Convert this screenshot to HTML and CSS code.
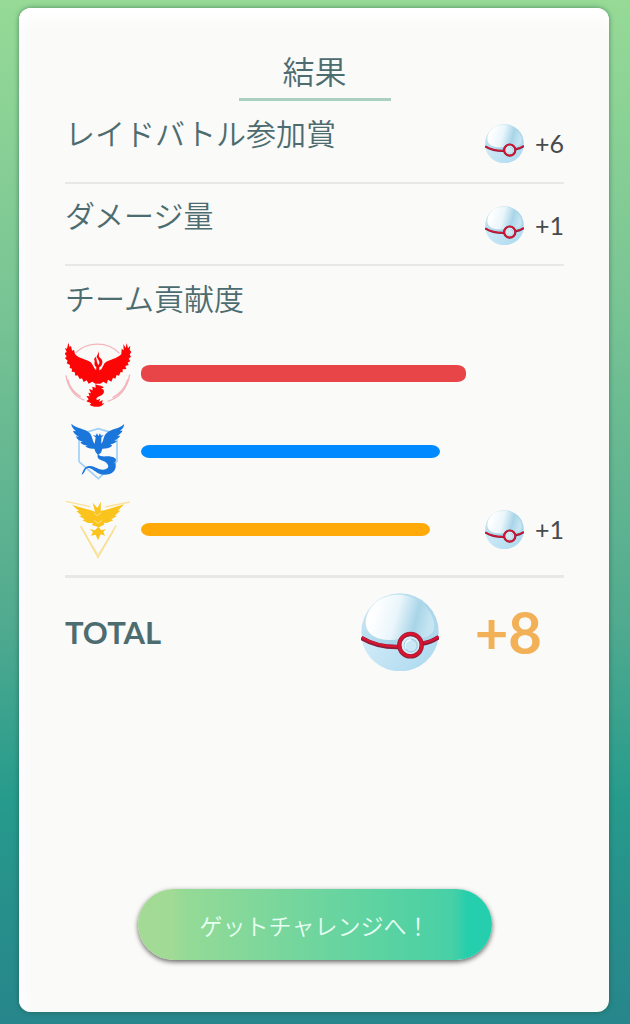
FILE: index.html
```html
<!DOCTYPE html>
<html lang="ja">
<head>
    <meta charset="utf-8">
    <meta name="viewport" content="width=device-width, initial-scale=1">
    <title>結果</title>
    <link rel="stylesheet" href="styles.css">
</head>

<body>
<!-- Shared ball symbol -->
<svg class="sprite" width="0" height="0" aria-hidden="true">
    <defs>
        <linearGradient id="ball-base" x1="0" y1="0" x2="1" y2="1">
            <stop offset="0" stop-color="#d5edf7"/>
            <stop offset="0.5" stop-color="#a9d5ea"/>
            <stop offset="1" stop-color="#b4dcef"/>
        </linearGradient>
        <linearGradient id="ball-shine" x1="0.1" y1="0.4" x2="0.95" y2="0.55">
            <stop offset="0" stop-color="#ffffff"/>
            <stop offset="0.4" stop-color="#eaf6fb"/>
            <stop offset="0.75" stop-color="#a8d5e8"/>
            <stop offset="1" stop-color="#c6e5f2"/>
        </linearGradient>
        <linearGradient id="ball-bottom" x1="0" y1="0" x2="1" y2="0.4">
            <stop offset="0" stop-color="#d3ecf8"/>
            <stop offset="1" stop-color="#b0dbf0"/>
        </linearGradient>
        <symbol id="ball" viewBox="0 0 230 230">
            <circle cx="115" cy="115" r="114" fill="url(#ball-base)"/>
            <path d="M1 132C38 155 75 163 120 161C160 160 200 147 229 130A115 115 0 0 1 1 132Z" fill="url(#ball-bottom)"/>
            <path d="M14 84C20 35 62 4 112 5C172 7 211 50 216 91C219 119 204 127 176 136C169 111 125 106 113 136C70 145 11 132 14 84Z" fill="url(#ball-shine)"/>
            <path d="M1 132C32 151 72 160 112 159M178 150C200 146 218 138 229 130" fill="none" stroke="#861f3b" stroke-width="13"/>
            <path d="M2 131C33 150 72 158 112 157M178 148C200 144 218 136 229 128" fill="none" stroke="#d81632" stroke-width="7"/>
            <circle cx="146" cy="154" r="33" fill="#d9eff8" stroke="#8f2038" stroke-width="13"/>
            <circle cx="146" cy="153" r="33" fill="none" stroke="#d81430" stroke-width="8"/>
            <circle cx="147" cy="155" r="19" fill="#cbe8f5" stroke="#a1cde2" stroke-width="4"/>
            <path d="M132 164A18 18 0 0 1 148 138" fill="none" stroke="#f2fbff" stroke-width="4"/>
        </symbol>
    </defs>
</svg>

<main class="card">
    <h1 class="title">結果</h1>

    <section class="row">
        <h2 class="label">レイドバトル参加賞</h2>
        <div class="reward">
            <svg class="ball" aria-hidden="true"><use href="#ball"/></svg>
            <span>+6</span>
        </div>
    </section>

    <section class="row">
        <h2 class="label">ダメージ量</h2>
        <div class="reward">
            <svg class="ball" aria-hidden="true"><use href="#ball"/></svg>
            <span>+1</span>
        </div>
    </section>

    <section class="teams">
        <h2 class="label">チーム貢献度</h2>

        <div class="team red">
            <svg class="emblem" viewBox="45 12 198 234" aria-hidden="true">
                <g fill="none" stroke="#f3b6bd" stroke-width="4">
                    <path d="M77 68C112 34 174 33 208 70"/>
                    <path d="M48 136C54 175 76 202 103 210"/>
                    <path d="M239 134C232 176 207 205 173 214"/>
                    <path d="M52 148C59 174 76 192 92 200M234 148C226 175 208 193 188 203" stroke-width="5"/>
                </g>
                <g fill="#fb0507">
                    <path d="M55 38L59 52L63 47L66 62L72 60L75 72C87 87 111 87 124 98L135 118L144 123L154 118L164 99C177 89 200 87 214 73L215 56L221 61L220 42L227 54L230 39L234 55L241 47L239 60L244 66L239 74L243 80L236 86L241 93L233 98L236 105L226 108L229 117L218 118L218 127L212 126L207 137L200 135L196 146L189 143L184 155L174 149L170 161L160 155L151 161L136 161L127 155L116 161L110 151L101 156L96 145L89 147L83 136L76 137L74 126L65 125L66 116L59 114L60 105L50 100L53 92L45 85L50 79L43 70L50 66L45 54L51 56Z"/>
                    <path d="M144 62C151 72 142 76 151 84C161 91 158 107 148 112L148 123H138L139 112C130 105 133 94 139 85L141 97L145 105C152 99 146 91 142 84C136 76 149 72 144 62Z"/>
                    <path d="M132 87L139 79L136 98Z"/>
                    <path d="M136 163C149 168 160 167 161 174L152 174C167 179 164 193 150 198C138 203 137 208 142 210L151 206L147 216L158 210L156 221L163 219C155 234 130 233 119 224L124 220L109 214L116 208L109 198L119 199L115 188L123 190L117 177L128 181L127 170L137 173Z"/>
                </g>
            </svg>
            <div class="track"><div class="bar" style="width: 100%"></div></div>
        </div>

        <div class="team blue">
            <svg class="emblem" viewBox="45 6 198 234" aria-hidden="true">
                <path d="M107 67L145 56L183 67M87 87V155L145 206L201 154V86" fill="none" stroke="#a0d0f6" stroke-width="5"/>
                <g fill="#1b76dc">
                    <path d="M64 41C80 56 105 55 119 69C128 79 126 92 134 101L137 82L128 76L137 77L141 70L145 78L150 70L153 77L161 75L154 83L154 101C162 92 159 78 170 69C184 56 208 57 222 42C222 54 216 58 210 62L218 62C212 72 207 73 202 77L211 77C206 86 199 88 193 91L201 93C194 101 187 102 181 103L187 107C176 116 166 115 157 116L153 128L144 135L137 127L133 116C122 118 112 114 106 109L113 107C102 107 94 102 91 96L99 95C88 94 80 87 78 79L88 80C77 76 70 68 69 62L79 64C70 57 64 50 64 41Z"/>
                    <path d="M144 133C151 143 169 137 184 140C205 144 199 155 189 162L196 158C202 180 187 194 163 194C139 194 132 176 116 174C103 173 107 190 95 194C101 177 105 166 121 168C139 170 151 184 168 177C181 172 174 157 158 152C148 149 139 145 144 133Z"/>
                </g>
            </svg>
            <div class="track"><div class="bar" style="width: 92%"></div></div>
        </div>

        <div class="team yellow">
            <svg class="emblem" viewBox="45 0 198 234" aria-hidden="true">
                <g fill="none" stroke="#fbe29a" stroke-width="5">
                    <path d="M92 108L144 202L198 107" stroke-linejoin="miter"/>
                    <path d="M48 34L120 50M239 36L166 51" stroke-width="4"/>
                </g>
                <path d="M101 125L144 194L190 124" fill="none" stroke="#f6d67c" stroke-width="2"/>
                <g fill="#fac41c">
                    <path d="M66 45L123 61L135 65L128 38L142 54L153 35L152 62L163 61L222 43L204 62L211 62L194 77L201 78L184 88L190 91L170 99L161 98L163 104L146 112L126 105L129 99L114 99L97 91L104 88L87 78L95 77L79 63L87 63Z"/>
                    <path d="M119 117L135 121L145 110L154 121L168 117L160 126L165 137L152 133L144 151L137 134L123 137L129 126Z"/>
                </g>
                <path d="M132 70L142 77L153 68M132 91L144 100L157 90" fill="none" stroke="#fdeebd" stroke-width="2"/>
            </svg>
            <div class="track"><div class="bar" style="width: 89%"></div></div>
            <div class="reward">
                <svg class="ball" aria-hidden="true"><use href="#ball"/></svg>
                <span>+1</span>
            </div>
        </div>
    </section>

    <section class="total">
        <h2 class="total-label">TOTAL</h2>
        <div class="total-reward">
            <svg class="ball-large" aria-hidden="true"><use href="#ball"/></svg>
            <span>+8</span>
        </div>
    </section>

    <button class="challenge" type="button">ゲットチャレンジへ！</button>
</main>
</body>
</html>
```

FILE: styles.css
```css
* {
    box-sizing: border-box;
}
body {
    display: flex;
    min-height: 100vh;
    margin: 0;
    padding: 8px 21px 12px 19px;
    background: linear-gradient(#96da96 0%, #78c494 30%, #52ab8f 60%, #269b8c 78%, #27908b 88%, #27868b 100%);
    color: #4d6c70;
    font-family: Lato, "Noto Sans CJK JP", sans-serif;
}
h1, h2 {
    margin: 0;
    font-weight: 350;
}
.sprite {
    position: absolute;
}
.card {
    display: flex;
    flex: 1;
    flex-direction: column;
    padding: 40px 45px 52px 46px;
    border-radius: 12px;
    background-color: #fafaf8;
    box-shadow: 0 0 5px rgba(30, 80, 60, 0.6), inset 0 20px 14px -8px #ffffff, inset 14px 0 12px -8px #fdfdff;
}
.title {
    align-self: center;
    width: 152px;
    margin-bottom: 1px;
    padding-bottom: 2px;
    border-bottom: 3px solid #acd0c0;
    font-size: 32px;
    line-height: 48px;
    text-align: center;
}
/* Reward rows */
.row {
    display: flex;
    justify-content: space-between;
    height: 82px;
    padding-top: 8px;
    border-bottom: 2px solid #e7e9e7;
}
.label {
    font-size: 30px;
    line-height: 46px;
}
.reward {
    display: flex;
    align-items: center;
    justify-content: flex-end;
    gap: 11px;
    color: #484a4b;
    font-size: 25px;
    line-height: 32px;
}
.row .reward {
    height: 66px;
}
.ball {
    width: 39px;
    height: 39px;
}
/* Team contribution */
.teams {
    padding: 9px 0 7px;
    border-bottom: 3px solid #e7e9e9;
}
.teams .label {
    padding-bottom: 13px;
}
.team {
    display: grid;
    grid-template-columns: 66px 1fr 80px;
    align-items: center;
    height: 78px;
}
.emblem {
    width: 66px;
    height: 78px;
}
.track {
    margin: 0 18px 0 10px;
}
.bar {
    height: 13px;
    border-radius: 9px / 7px;
}
.red .bar {
    height: 17px;
    background-color: #e84548;
}
.blue .bar {
    background-color: #008aff;
}
.yellow .bar {
    background-color: #ffaa08;
}
/* Total */
.total {
    display: flex;
    align-items: center;
    justify-content: space-between;
    padding: 15px 22px 0 0;
}
.total-label {
    font-size: 31px;
    font-weight: 700;
}
.total-reward {
    display: flex;
    align-items: center;
    gap: 36px;
    color: #f2b057;
    font-size: 58px;
    font-weight: 700;
    line-height: 78px;
}
.ball-large {
    width: 78px;
    height: 78px;
}
.challenge {
    align-self: center;
    width: 354px;
    max-width: 100%;
    height: 71px;
    margin-top: auto;
    border: 0;
    border-radius: 36px;
    background: linear-gradient(to right, #a3db94 0%, #a0da94 10%, #95da96 13%, #47d0a6 89%, #25ceac 93%, #25ceac 100%);
    box-shadow: 0 2px 5px rgba(0, 0, 0, 0.6);
    color: #e6fff2;
    font-family: inherit;
    font-size: 23px;
    font-weight: 350;
    cursor: pointer;
}
```
